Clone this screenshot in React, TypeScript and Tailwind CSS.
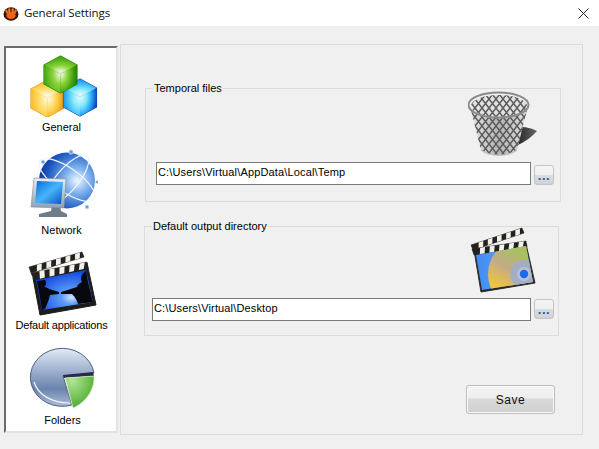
const sans = "font-['Liberation_Sans',Arial,sans-serif]";

function Logo() {
  return (
    <svg width="16" height="15" viewBox="0 0 16 15" className="mr-[5px] shrink-0">
      <ellipse cx="8" cy="8" rx="7.5" ry="6.8" fill="#3a1208" />
      <ellipse cx="8" cy="9.5" rx="4.6" ry="3.6" fill="#f0641a" />
      <rect x="2.6" y="3.4" width="2.2" height="4.5" rx="1" fill="#ef6a1e" transform="rotate(-20 3.6 5.6)" />
      <rect x="5.2" y="2.2" width="2.2" height="5" rx="1" fill="#f47a24" />
      <rect x="8.6" y="2.2" width="2.2" height="5" rx="1" fill="#f47a24" />
      <rect x="11.2" y="3.4" width="2.2" height="4.5" rx="1" fill="#ef6a1e" transform="rotate(20 12.4 5.6)" />
    </svg>
  );
}

function Cube({ cx, cy, id, light, mid, dark, edge }: { cx: number; cy: number; id: string; light: string; mid: string; dark: string; edge: string }) {
  const w = 16.5;
  const h = 9;
  const v = 19;
  return (
    <g strokeLinejoin="round">
      <defs>
        <radialGradient id={id + "t"} cx="0.5" cy="0.85" r="0.75">
          <stop offset="0" stopColor="#ffffff" stopOpacity="0.9" />
          <stop offset="0.4" stopColor={light} />
          <stop offset="1" stopColor={mid} />
        </radialGradient>
        <radialGradient id={id + "l"} cx="0.95" cy="0.3" r="0.95">
          <stop offset="0" stopColor="#ffffff" stopOpacity="0.9" />
          <stop offset="0.4" stopColor={light} />
          <stop offset="1" stopColor={mid} />
        </radialGradient>
        <radialGradient id={id + "r"} cx="0.05" cy="0.3" r="1">
          <stop offset="0" stopColor="#ffffff" stopOpacity="0.9" />
          <stop offset="0.35" stopColor={light} />
          <stop offset="0.7" stopColor={mid} />
          <stop offset="1" stopColor={dark} />
        </radialGradient>
      </defs>
      <path d={`M${cx} ${cy - h} L${cx + w} ${cy} L${cx + w} ${cy + v} L${cx} ${cy + h + v} L${cx - w} ${cy + v} L${cx - w} ${cy} Z`} fill={mid} stroke={edge} strokeWidth="1.2" />
      <path d={`M${cx} ${cy - h} L${cx + w} ${cy} L${cx} ${cy + h} L${cx - w} ${cy} Z`} fill={`url(#${id}t)`} />
      <path d={`M${cx - w} ${cy} L${cx} ${cy + h} L${cx} ${cy + h + v} L${cx - w} ${cy + v} Z`} fill={`url(#${id}l)`} />
      <path d={`M${cx + w} ${cy} L${cx} ${cy + h} L${cx} ${cy + h + v} L${cx + w} ${cy + v} Z`} fill={`url(#${id}r)`} />
    </g>
  );
}

function CubesIcon() {
  return (
    <svg width="72" height="63" viewBox="26 54 72 63" className="block">
      <Cube cx={47.5} cy={89} id="y" light="#ffe27a" mid="#fbbd2a" dark="#e08a10" edge="#e89a18" />
      <Cube cx={80} cy={88} id="b" light="#7eeaff" mid="#1f9cf0" dark="#1238b0" edge="#1a4cc0" />
      <Cube cx={60.5} cy={65} id="g" light="#8fd63e" mid="#46a50e" dark="#1f7a08" edge="#2d8a0a" />
    </svg>
  );
}

function NetworkIcon() {
  return (
    <svg width="72" height="69" viewBox="26 149 72 69" className="block">
      <defs>
        <radialGradient id="globe" cx="0.68" cy="0.5" r="0.75">
          <stop offset="0" stopColor="#f0f6ff" />
          <stop offset="0.3" stopColor="#7fb2ee" />
          <stop offset="0.7" stopColor="#1f5cc4" />
          <stop offset="1" stopColor="#0a2a80" />
        </radialGradient>
        <linearGradient id="scr" x1="0" y1="0" x2="1" y2="1">
          <stop offset="0" stopColor="#0a68d8" />
          <stop offset="0.5" stopColor="#46b6fa" />
          <stop offset="1" stopColor="#0a50c0" />
        </linearGradient>
        <linearGradient id="mon" x1="0" y1="0" x2="0" y2="1">
          <stop offset="0" stopColor="#e8f0f6" />
          <stop offset="1" stopColor="#8fa0b2" />
        </linearGradient>
      </defs>
      <circle cx="67" cy="180.5" r="28" fill="url(#globe)" />
      <g fill="none" stroke="#eef5ff" strokeWidth="1.2">
        <ellipse cx="67" cy="180" rx="33" ry="12" transform="rotate(35 67 180)" />
        <ellipse cx="67" cy="180" rx="31" ry="11" transform="rotate(-50 67 180)" />
      </g>
      <g fill="#6a9ed0" stroke="#e0ecf8" strokeWidth="0.7">
        <circle cx="71" cy="152" r="2.2" />
        <circle cx="43" cy="162" r="2" />
        <circle cx="97" cy="182" r="1.6" />
        <circle cx="87" cy="207" r="2" />
      </g>
      <path d="M52 205 L60 205 L61 211 L67 214 L67 217 L39 217 L39 214 L51 211 Z" fill="#6f7d88" />
      <path d="M34 178 L66 179 L64 208 L31 207 Z" fill="url(#mon)" stroke="#7f8b96" strokeWidth="0.6" />
      <path d="M37 181 L63 182 L61 204 L35 203 Z" fill="url(#scr)" />
    </svg>
  );
}

function ClapperTop({ a, b, c, d }: { a: number[]; b: number[]; c: number[]; d: number[] }) {
  // stripes laid along the quad a-b (top edge) / d-c (bottom edge)
  const stripes = [0.12, 0.3, 0.48, 0.66, 0.84];
  const lerp = (p: number[], q: number[], t: number) => [p[0] + (q[0] - p[0]) * t, p[1] + (q[1] - p[1]) * t];
  return (
    <g>
      <path d={`M${a} L${b} L${c} L${d} Z`} fill="#23211f" strokeLinejoin="round" stroke="#23211f" strokeWidth="0.6" />
      {stripes.map((t) => {
        const p1 = lerp(a, b, t + 0.03);
        const p2 = lerp(a, b, t + 0.12);
        const p3 = lerp(d, c, t + 0.08);
        const p4 = lerp(d, c, t - 0.01);
        return <path key={t} d={`M${p1} L${p2} L${p3} L${p4} Z`} fill="#f2f2ea" />;
      })}
    </g>
  );
}

function AppsIcon() {
  return (
    <svg width="72" height="66" viewBox="26 250 72 66" className="block">
      <defs>
        <radialGradient id="sky" cx="0.62" cy="0.68" r="0.7">
          <stop offset="0" stopColor="#d4e6fd" />
          <stop offset="0.25" stopColor="#5c9cf6" />
          <stop offset="1" stopColor="#0c40dc" />
        </radialGradient>
      </defs>
      <ClapperTop a={[29, 267]} b={[82, 252]} c={[84, 257]} d={[31, 273]} />
      <path d="M33 278 L87 263 L96 305 L40 315 Z" fill="#1d1c1c" stroke="#1d1c1c" strokeWidth="1" strokeLinejoin="round" />
      <ClapperTop a={[31, 273]} b={[87, 262]} c={[88, 268]} d={[34, 280]} />
      <path d="M36 280 L86 270 L93 302 L42 310 Z" fill="url(#sky)" />
      <path d="M37 281 L45 280 C47 283 46 286 44 287 C46 287 48 288 49 289 L59 292 L59 294 L50 295 C49 300 47 304 45 309 L42 310 Z" fill="#07090f" />
      <path d="M86 271 L88 282 L93 302 L78 304 C77 300 75 297 72 294 L61 294 L61 292 L77 287 C78 284 80 283 82 282 C80 279 81 274 86 271 Z" fill="#07090f" />
    </svg>
  );
}

function FoldersIcon() {
  return (
    <svg width="72" height="64" viewBox="26 346 72 64" className="block">
      <defs>
        <linearGradient id="pie" x1="0" y1="0" x2="0" y2="1">
          <stop offset="0" stopColor="#e2ebf7" />
          <stop offset="0.45" stopColor="#93a7c6" />
          <stop offset="0.7" stopColor="#6a84ad" />
          <stop offset="1" stopColor="#aebcd4" />
        </linearGradient>
        <radialGradient id="slice" cx="0.25" cy="0.15" r="1">
          <stop offset="0" stopColor="#b2e69a" />
          <stop offset="0.6" stopColor="#6cbd4c" />
          <stop offset="1" stopColor="#4d9a32" />
        </radialGradient>
      </defs>
      <path d="M63 376 L94 373 A32 29 0 1 0 72 405 Z" fill="url(#pie)" stroke="#4e5f80" strokeWidth="1" />
      <path d="M34 382 C38 395 52 403 70 403" fill="none" stroke="#f4f6fa" strokeWidth="1.2" />
      <path d="M63 375 L93 372 L94 376 L64 378 Z" fill="#262c4a" />
      <path d="M65 378 L94 376 C95 390 85 403 73 408 Z" fill="url(#slice)" stroke="#dff2d2" strokeWidth="0.7" />
    </svg>
  );
}

function BasketIcon() {
  return (
    <svg width="70" height="67" viewBox="469 91 70 67" className="block">
      <defs>
        <pattern id="mesh" width="7" height="9" patternUnits="userSpaceOnUse">
          <path d="M0 0 L7 9 M7 0 L0 9" stroke="#5c5c5c" strokeWidth="1.5" />
        </pattern>
        <linearGradient id="bask" x1="0" y1="0" x2="1" y2="0">
          <stop offset="0" stopColor="#e4e4e4" />
          <stop offset="0.5" stopColor="#b4b4b4" />
          <stop offset="1" stopColor="#e0e0e0" />
        </linearGradient>
        <linearGradient id="shade" x1="0" y1="0" x2="1" y2="0">
          <stop offset="0" stopColor="#222" />
          <stop offset="1" stopColor="#666" />
        </linearGradient>
      </defs>
      <path d="M522 127 C528 127 534 129 538 131 C533 137 526 142 517 146 Z" fill="url(#shade)" />
      <ellipse cx="500" cy="106" rx="28" ry="11" fill="#e2e2e2" />
      <ellipse cx="500" cy="106" rx="28" ry="11" fill="url(#mesh)" />
      <path d="M472 110 C485 121 515 121 528 110 L518 150 C510 157 490 157 482 150 Z" fill="url(#bask)" />
      <path d="M472 110 C485 121 515 121 528 110 L518 150 C510 157 490 157 482 150 Z" fill="url(#mesh)" />
      <ellipse cx="499.5" cy="105" rx="30" ry="12.5" fill="none" stroke="#8a8a8a" strokeWidth="2" />
      <path d="M482 150 C490 157 510 157 518 150" fill="none" stroke="#c4c4c4" strokeWidth="1.5" />
    </svg>
  );
}

function CdClapperIcon() {
  return (
    <svg width="67" height="67" viewBox="471 227 67 67" className="block">
      <defs>
        <linearGradient id="cdbg" x1="0" y1="0" x2="1" y2="0">
          <stop offset="0" stopColor="#3f8cf4" />
          <stop offset="1" stopColor="#6fb0f8" />
        </linearGradient>
        <linearGradient id="cd" x1="0.7" y1="0" x2="0.2" y2="1">
          <stop offset="0" stopColor="#e8a83a" />
          <stop offset="0.25" stopColor="#a6c25e" />
          <stop offset="0.5" stopColor="#c4aa88" />
          <stop offset="0.8" stopColor="#f4c934" />
          <stop offset="1" stopColor="#fdf39a" />
        </linearGradient>
        <clipPath id="frame">
          <path d="M477 255 L527 246 L534 282 L483 290 Z" />
        </clipPath>
      </defs>
      <ClapperTop a={[472, 245]} b={[523, 228]} c={[525, 233]} d={[474, 250]} />
      <path d="M475 250 L527 244 L536 283 L482 292 Z" fill="#2a2a2a" stroke="#2a2a2a" strokeWidth="1" strokeLinejoin="round" />
      <ClapperTop a={[473, 249]} b={[527, 241]} c={[528, 247]} d={[475, 255]} />
      <path d="M477 255 L527 246 L534 282 L483 290 Z" fill="url(#cdbg)" />
      <g clipPath="url(#frame)">
        <circle cx="525" cy="274" r="36" fill="url(#cd)" />
        <circle cx="525" cy="274" r="14" fill="#a4aec2" />
        <circle cx="525" cy="274" r="7" fill="#b8c0d0" />
        <circle cx="525" cy="274" r="4.2" fill="#1a6af0" />
      </g>
    </svg>
  );
}

function BrowseButton() {
  return (
    <button className={`w-[20px] h-[20px] shrink-0 ml-[3px] rounded-[3px] border border-[#c4c4c4] bg-[linear-gradient(#f4f4f4_0%,#f0f0f0_48%,#dcdcdc_52%,#d2d2d2_100%)] text-[#0f63b4] text-[13px] font-bold leading-[20px] tracking-[0.5px] ${sans}`}>
      ...
    </button>
  );
}

export default function App() {
  return (
    <div className={`w-[599px] h-[449px] bg-[#f0f0f0] overflow-hidden text-[11px] text-black ${sans}`}>
      <div className="h-[26px] bg-white flex items-center pl-[3px] pr-[10px]">
        <Logo />
        <span className="font-['Open_Sans',sans-serif] text-[11.5px] tracking-[-0.12px] text-[#111]">General Settings</span>
        <svg width="11" height="11" viewBox="0 0 11 11" className="ml-auto">
          <path d="M0.5 0.5 L10.5 10.5 M10.5 0.5 L0.5 10.5" stroke="#222" strokeWidth="1" />
        </svg>
      </div>

      <div className="flex items-start pl-[4px] pt-[18px]">
        <div className="mt-[2px] w-[114px] h-[387px] bg-white border-2 border-t-[#6b6b6b] border-l-[#6b6b6b] border-r-[#e3e3e3] border-b-[#e3e3e3] flex flex-col items-center pl-[1px]">
          <div className="mt-[6px]"><CubesIcon /></div>
          <div className="mt-[3px] leading-[14px]">General</div>
          <div className="mt-[15px]"><NetworkIcon /></div>
          <div className="mt-[5px] leading-[14px]">Network</div>
          <div className="mt-[13px]"><AppsIcon /></div>
          <div className="mt-[2px] leading-[14px] whitespace-nowrap tracking-[-0.2px]">Default applications</div>
          <div className="mt-[14px]"><FoldersIcon /></div>
          <div className="mt-[3px] leading-[14px] pl-[2px]">Folders</div>
        </div>

        <div className="ml-[2px] w-[463px] h-[391px] border border-[#dcdcdc] pl-[24px] pt-[43px] flex flex-col">
          <div className="relative w-[416px] h-[114px] border border-[#dcdcdc] pl-[10px] pr-[6px] pt-[2px]">
            <span className="absolute left-[7px] -top-[7px] px-[1px] bg-[#f0f0f0] leading-[13px]">Temporal files</span>
            <div className="flex justify-end pr-[16px]"><BasketIcon /></div>
            <div className="flex items-end mt-[4px]">
              <div className="flex-1 h-[23px] bg-white border border-[#7a7a7a] px-[1px] leading-[18px] tracking-[0.15px]">C:\Users\Virtual\AppData\Local\Temp</div>
              <BrowseButton />
            </div>
          </div>

          <div className="relative -ml-[1px] mt-[24px] w-[415px] h-[110px] border border-[#dcdcdc] pl-[7px] pr-[4px]">
            <span className="absolute left-[7px] -top-[7px] px-[1px] bg-[#f0f0f0] leading-[13px]">Default output directory</span>
            <div className="flex justify-end pr-[17px]"><CdClapperIcon /></div>
            <div className="flex items-start mt-[4px]">
              <div className="flex-1 h-[23px] bg-white border border-[#7a7a7a] px-[1px] leading-[18px] tracking-[0.15px]">C:\Users\Virtual\Desktop</div>
              <div className="mt-[1px]"><BrowseButton /></div>
            </div>
          </div>

          <div className="flex justify-end pr-[27px] mt-[49px]">
            <button className="w-[89px] h-[29px] rounded-[3px] border border-[#bdbdbd] bg-[linear-gradient(#f4f4f4_0%,#eeeeee_44%,#dadada_48%,#cfcfcf_100%)] shadow-[inset_0_0_0_1px_#fafafa] text-[12px] tracking-[0.5px] text-[#111]">
              Save
            </button>
          </div>
        </div>
      </div>
    </div>
  );
}
